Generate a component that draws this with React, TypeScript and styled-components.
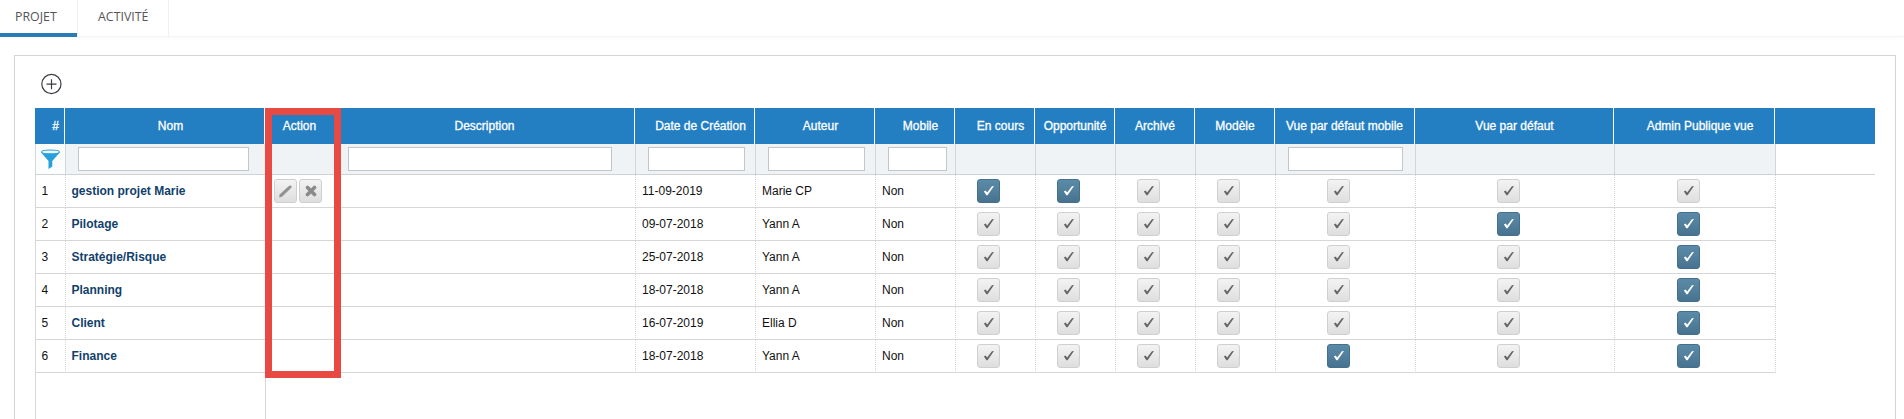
import React from "react";
import styled, { createGlobalStyle, css } from "styled-components";

const GlobalStyle = createGlobalStyle`
  * { box-sizing: border-box; }
  html, body { margin: 0; background: #fff; overflow: hidden; }
  body { font-family: "Liberation Sans", Arial, sans-serif; font-size: 12px; color: #111; }
`;

const line = "#d4d6d8";
const tracks =
  "30px 200px 70px 300px 120px 120px 80px 80px 80px 80px 80px 140px 199px 161px 1fr";

const Page = styled.div`
  height: 419px;
  display: flex;
  flex-direction: column;
  overflow: hidden;
`;

const Tabs = styled.nav`
  display: flex;
  height: 37px;
  flex: none;
  border-bottom: 1px solid #f6f6f6;
  box-shadow: 0 2px 4px rgba(0, 0, 0, 0.025);
`;

const Tab = styled.a<{ $active?: boolean; $width: number }>`
  width: ${(p) => p.$width}px;
  height: 37px;
  padding: 8px 0 0 ${(p) => (p.$active ? 15 : 20)}px;
  font: 12.4px/17px "Open Sans", "Noto Sans", sans-serif;
  color: #555;
  border-right: 1px solid #f0f0f0;
  ${(p) =>
    p.$active &&
    css`
      box-shadow: inset 0 -4px 0 #2b7bb7;
    `}
`;

const Panel = styled.main`
  flex: 1;
  margin: 18px 8px 0 14px;
  padding: 17px 20px 0;
  border: 1px solid #d2d4d5;
  border-bottom: 0;
  display: flex;
  flex-direction: column;
`;

const AddButton = styled.button`
  flex: none;
  display: flex;
  align-items: flex-start;
  width: 23px;
  height: 35px;
  margin-left: 6px;
  padding: 0;
  border: 0;
  background: none;
`;

const Grid = styled.div`
  position: relative;
  flex: 1;
  display: flex;
  flex-direction: column;
`;

const HeaderRow = styled.div`
  display: grid;
  grid-template-columns: ${tracks};
  height: 36px;
  flex: none;
  background: #237ec2;
`;

const HeaderCell = styled.div<{ $shift?: number }>`
  display: flex;
  align-items: center;
  justify-content: center;
  padding-left: ${(p) => p.$shift ?? 0}px;
  padding-bottom: 1px;
  color: #fff;
  white-space: nowrap;
  -webkit-text-stroke: 0.3px #fff;
  border-right: 1px solid #fff;
  &:last-child { border-right: 0; }
`;

const Body = styled.div`
  flex: 1;
  display: flex;
  flex-direction: column;
  border-left: 1px solid ${line};
`;

const FilterRow = styled.div`
  display: grid;
  grid-template-columns: ${tracks};
  height: 31px;
  flex: none;
  border-bottom: 1px solid #cfd2d4;
`;

const FilterCell = styled.div<{ $plain?: boolean; $open?: boolean }>`
  padding: 3px 0 0 12px;
  background: ${(p) => (p.$plain ? "#fbfcfc" : "#f0f3f5")};
  border-right: 1px solid ${(p) => (p.$open ? "transparent" : line)};
`;

const FunnelCell = styled(FilterCell)`
  padding: 5px 0 0 4px;
  svg { display: block; }
`;

const FilterInput = styled.input<{ $width: number }>`
  display: block;
  width: ${(p) => p.$width}px;
  height: 24px;
  padding: 0 4px;
  border: 1px solid #c4c6c8;
  background: #fff;
  outline: none;
`;

const Row = styled.div`
  display: grid;
  grid-template-columns: ${tracks};
  height: 33px;
  flex: none;
`;

const Cell = styled.div<{ $open?: boolean; $solid?: boolean }>`
  display: flex;
  align-items: center;
  padding: 0 6px 1px;
  white-space: nowrap;
  border-bottom: 1px solid ${line};
  border-right: 1px ${(p) => (p.$solid ? "solid" : "dotted")}
    ${(p) => (p.$open ? "transparent" : line)};
`;

const IndexCell = styled(Cell)`
  padding-left: 5.5px;
`;

const NameCell = styled(Cell)`
  padding-left: 5.5px;
  color: #123f6c;
  font-weight: bold;
`;

const ActionCell = styled(Cell)`
  gap: 2px;
  padding: 0 0 0 8px;
`;

const CheckCell = styled(Cell)`
  justify-content: center;
  padding: 0 14px 0 0;
`;

const IconButton = styled.button<{ $on?: boolean }>`
  display: flex;
  align-items: center;
  justify-content: center;
  width: 23px;
  height: 24px;
  padding: 0;
  border-radius: 3px;
  border: 1px solid ${(p) => (p.$on ? "#43708c" : "#cfcfcf")};
  background: ${(p) =>
    p.$on
      ? "linear-gradient(#5b8ba8, #487390)"
      : "linear-gradient(#f3f3f3, #dedede)"};
  color: ${(p) => (p.$on ? "#fff" : "#666")};
  svg { display: block; }
`;

const FrozenFill = styled.div`
  flex: 1;
  width: 230px;
  border-right: 1px solid ${line};
`;

const Highlight = styled.div`
  position: absolute;
  left: 230px;
  top: 0;
  width: 76px;
  height: 270px;
  border: 7px solid #e84a43;
  pointer-events: none;
`;

const CheckIcon = () => (
  <svg width="13" height="12" viewBox="0 0 13 12">
    <path d="M1.9 6.6 3.6 5.5 5.2 7.6 9.9 1.2 12 .9 5.6 10.2 4.4 10.3Z" fill="currentColor" />
  </svg>
);

const PencilIcon = () => (
  <svg width="15" height="15" viewBox="0 0 15 15">
    <path d="M1.2 13.4 1.6 10.6 10.6 2.2Q12.8.7 13.6 2.2 13.9 3.2 12.6 4.6L4 12.7Z" fill="#929292" />
  </svg>
);

const CrossIcon = () => (
  <svg width="12" height="12" viewBox="0 0 12 12">
    <path d="M2.5 2.5 9.5 9.5M9.5 2.5 2.5 9.5" stroke="#8a8a8a" strokeWidth="3.6" strokeLinecap="round" />
  </svg>
);

const FunnelIcon = () => (
  <svg width="22" height="21" viewBox="0 0 22 21">
    <path d="M1 3.2 8.5 12V20L12.3 17.6V12L20 3.2Z" fill="#29a0da" />
    <ellipse cx="10.5" cy="2.9" rx="9" ry="1.9" fill="#e8f6fd" stroke="#29a0da" strokeWidth="1.1" />
  </svg>
);

const AddIcon = () => (
  <svg width="23" height="23" viewBox="0 0 23 23" fill="none" stroke="#3c3c44">
    <circle cx="10.4" cy="11" r="9.6" strokeWidth="1.2" />
    <path d="M5.5 11.2H15.5M10.5 6.2V16.2" strokeWidth="1.2" />
  </svg>
);

const headers: { label: string; shift?: number }[] = [
  { label: "#", shift: 12 },
  { label: "Nom", shift: 12 },
  { label: "Action" },
  { label: "Description" },
  { label: "Date de Création", shift: 12 },
  { label: "Auteur", shift: 12 },
  { label: "Mobile", shift: 12 },
  { label: "En cours", shift: 12 },
  { label: "Opportunité", shift: 1 },
  { label: "Archivé", shift: 1 },
  { label: "Modèle", shift: 1 },
  { label: "Vue par défaut mobile" },
  { label: "Vue par défaut", shift: 1 },
  { label: "Admin Publique vue", shift: 12 },
  { label: "" },
];

const filterWidths = [171, 0, 264, 97, 97, 59, 0, 0, 0, 0, 115, 0, 0];

type Project = { name: string; date: string; author: string; flags: number[]; editable?: boolean };

const projects: Project[] = [
  { name: "gestion projet Marie", date: "11-09-2019", author: "Marie CP", flags: [1, 1, 0, 0, 0, 0, 0], editable: true },
  { name: "Pilotage", date: "09-07-2018", author: "Yann A", flags: [0, 0, 0, 0, 0, 1, 1] },
  { name: "Stratégie/Risque", date: "25-07-2018", author: "Yann A", flags: [0, 0, 0, 0, 0, 0, 1] },
  { name: "Planning", date: "18-07-2018", author: "Yann A", flags: [0, 0, 0, 0, 0, 0, 1] },
  { name: "Client", date: "16-07-2019", author: "Ellia D", flags: [0, 0, 0, 0, 0, 0, 1] },
  { name: "Finance", date: "18-07-2018", author: "Yann A", flags: [0, 0, 0, 0, 1, 0, 1] },
];

export default function App() {
  return (
    <Page>
      <GlobalStyle />
      <Tabs>
        <Tab $active $width={78}>PROJET</Tab>
        <Tab $width={91}>ACTIVITÉ</Tab>
      </Tabs>
      <Panel>
        <AddButton aria-label="Ajouter"><AddIcon /></AddButton>
        <Grid>
          <HeaderRow>
            {headers.map((h, i) => (
              <HeaderCell key={i} $shift={h.shift}>{h.label}</HeaderCell>
            ))}
          </HeaderRow>
          <Body>
            <FilterRow>
              <FunnelCell $plain><FunnelIcon /></FunnelCell>
              {filterWidths.map((w, i) => (
                <FilterCell key={i} $open={i === 1}>
                  {w > 0 && <FilterInput $width={w} />}
                </FilterCell>
              ))}
            </FilterRow>
            {projects.map((p, i) => (
              <Row key={p.name}>
                <IndexCell>{i + 1}</IndexCell>
                <NameCell $solid>{p.name}</NameCell>
                <ActionCell $open>
                  {p.editable && (
                    <>
                      <IconButton aria-label="Modifier"><PencilIcon /></IconButton>
                      <IconButton aria-label="Supprimer"><CrossIcon /></IconButton>
                    </>
                  )}
                </ActionCell>
                <Cell />
                <Cell>{p.date}</Cell>
                <Cell>{p.author}</Cell>
                <Cell>Non</Cell>
                {p.flags.map((f, j) => (
                  <CheckCell key={j}>
                    <IconButton $on={f === 1}><CheckIcon /></IconButton>
                  </CheckCell>
                ))}
              </Row>
            ))}
            <FrozenFill />
          </Body>
          <Highlight />
        </Grid>
      </Panel>
    </Page>
  );
}
